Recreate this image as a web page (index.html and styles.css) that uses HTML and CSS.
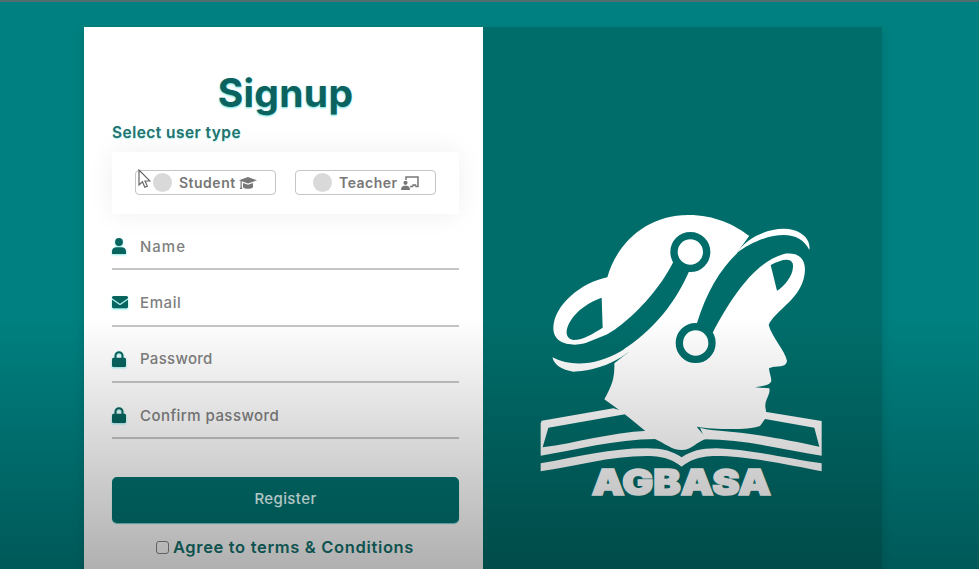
FILE: index.html
```html
<!DOCTYPE html>
<html lang="en">
<head>
<meta charset="utf-8">
<title>Signup</title>
<link rel="stylesheet" href="styles.css">
</head>
<body>
<main class="card">
  <form class="form">
    <h1 class="title"><span>Signup</span></h1>
    <p class="label"><span>Select user type</span></p>
    <div class="types">
      <label class="type"><i class="dot"></i><span class="student">Student</span>
        <svg class="cap" viewBox="0 0 18 14"><path d="M0 4.300 9 1l9 3.300L9 7.500z"/><path d="M4 7v4.300c2 2 8 2 10 0V7L9 8.800zM1.500 5h1.200v6l.7 2H.8l.7-2z"/></svg>
      </label>
      <label class="type"><i class="dot"></i><span class="teacher">Teacher</span>
        <svg class="board" viewBox="0 0 18 14"><path d="M5 4V1h12v9.500h-2.500M9 10.500h3M12 10.500V9h2.500v1.500" fill="none" stroke="currentColor" stroke-width="1.500"/><circle cx="4.500" cy="6.800" r="2.100"/><path d="M0 14c0-3 1.500-4.300 3.500-4.300h2c2 0 3.500 1.300 3.500 4.300z"/></svg>
      </label>
      <svg class="pointer" viewBox="0 0 13 20"><path d="M1 1v15l3.500-3.200 2.300 5.400 2.500-1.100L7 12h5z" fill="#fff" stroke="#666" stroke-width="1.200"/></svg>
    </div>
    <div class="field"><svg viewBox="0 0 16 16"><circle cx="7" cy="4" r="3.900"/><path d="M0 16v-2.500C0 10.500 2 9.200 4.500 9.200h5c2.500 0 4.500 1.300 4.500 4.300V16z"/></svg><span class="t-name">Name</span></div>
    <div class="field"><svg viewBox="0 0 16 16"><path d="M1.500 2h13Q16 2 16 3.500v.8L8 9.800 0 4.300v-.8Q0 2 1.500 2z"/><path d="m0 5.800 8 5.500 8-5.500v7q0 1.500-1.500 1.500h-13Q0 14.300 0 12.800z"/></svg><span class="t-email">Email</span></div>
    <div class="field"><svg viewBox="0 0 16 16"><path d="M3.500 8V4.800a3.500 3.500 0 0 1 7 0V8" fill="none" stroke="currentColor" stroke-width="2"/><rect y="6.700" width="14" height="9.300" rx="1.500"/></svg><span class="t-pass">Password</span></div>
    <div class="field"><svg viewBox="0 0 16 16"><path d="M3.500 8V4.800a3.500 3.500 0 0 1 7 0V8" fill="none" stroke="currentColor" stroke-width="2"/><rect y="6.700" width="14" height="9.300" rx="1.500"/></svg><span class="t-confirm">Confirm password</span></div>
    <button type="button" class="register"><span>Register</span></button>
    <label class="agree"><i class="box"></i><span>Agree to terms &amp; Conditions</span></label>
  </form>
  <section class="brand">
    <svg class="logo" viewBox="0 0 900 930">
      <g class="ink">
        <path d="M35 662 250 625 340 650 380 717C250 718 140 750 32 767V670zM705 635 875 663V767C760 748 640 718 525 718L500 660z"/>
        <path class="ground" d="M55 683 285 643 352 692C240 698 140 728 38 742z"/>
        <path d="M232 232C260 130 350 45 475 45 555 45 612 74 658 108L620 160 690 150 770 160C824 158 832 198 820 240 802 302 732 336 716 375 726 412 765 452 771 482 768 507 735 494 717 505 718 522 728 540 722 547 715 557 695 558 675 562L718 565C722 585 705 597 706 620 712 650 708 672 690 680 650 693 560 690 500 680L530 716C500 724 485 750 455 750 425 750 405 730 375 717L285 643 223 598C238 568 255 545 253 490L295 457 270 440 240 400 165 430C120 441 70 430 70 385 71 315 155 247 232 232z"/>
        <path class="ground" d="M500 680C550 688 650 692 690 678L705 657 853 683 868 740C740 712 650 698 570 692 545 691 520 686 500 680z"/>
        <path class="ground" d="M430 185C385 280 245 437 130 435 99 435 80 425 67 405V472C130 505 210 490 270 455 375 390 440 300 478 212z"/>
        <path class="ground" d="M500 372C530 275 570 210 620 161L658 108C700 90 800 65 838 150L836 178C810 160 795 158 770 160 675 180 600 300 548 398z"/>
        <path d="M620 160C655 105 735 76 790 90 825 100 842 125 838 150 820 111 780 98 730 108 690 116 648 136 620 160zM67 472C130 505 210 490 270 455L300 437 310 445 295 457C240 500 170 515 130 515 95 510 73 495 67 472z"/>
        <path class="ground" d="M215 293 218 383C190 400 160 420 130 420 105 415 105 390 120 365 140 330 180 305 215 293zM722 195C755 178 780 172 788 190 795 220 765 258 741 272z"/>
        <circle class="node" cx="481" cy="156" r="49"/><circle class="node" cx="497" cy="429" r="49"/>
        <path d="M32 790C150 770 240 745 350 745 400 745 430 755 455 772 480 755 510 745 560 745 660 748 780 777 875 790V814C780 795 650 768 560 768 500 768 475 785 455 800 435 785 410 768 350 768 240 768 130 800 32 814z"/>
        <text x="185" y="885" textLength="538" lengthAdjust="spacingAndGlyphs">AGBASA</text>
      </g>
    </svg>
  </section>
</main>
<div class="shade"></div>
</body>
</html>
```
FILE: styles.css
```css
* { box-sizing: border-box; }
body {
  margin: 0;
  height: 569px;
  padding: 25px 0 0 84px;
  overflow: hidden;
  background: #008080;
  border-top: 2px solid #526d70;
  font-family: Inter, "Open Sans", sans-serif;
  color: #0b625e;
}
.card {
  display: flex;
  width: 798px;
  height: 542px;
  box-shadow: 0 5px 10px rgba(0, 0, 0, .15);
}
.form { width: 399px; padding: 40px 24px 0 28px; background: #fff; }
.title { margin: 0; height: 54px; text-align: center; font-size: 39px; line-height: 52px; font-weight: 700; letter-spacing: .3px; text-shadow: 0 1px 2px #62dddd; }
.label { margin: 0; height: 31px; font-size: 15.500px; line-height: 24px; font-weight: 600; letter-spacing: .45px; color: #25736f; text-shadow: 0 1px 1px #b0f0f0; white-space: nowrap; }
.types {
  position: relative;
  display: flex;
  justify-content: center;
  align-items: center;
  gap: 19px;
  height: 62px;
  padding-bottom: 1px;
  background: #fff;
  box-shadow: 0 0 28px rgba(0, 0, 0, .065);
}
.type {
  display: flex;
  align-items: center;
  width: 141px;
  height: 25px;
  padding-left: 17px;
  border: 1.500px solid #c5c5c5;
  border-radius: 4px;
  color: #777;
  font-size: 14px;
  font-weight: 600;
  letter-spacing: .5px;
}
.dot { width: 19px; height: 19px; margin-right: 7px; border-radius: 50%; background: #d9d9d9; flex: none; }
.type svg { width: 18px; height: 14px; margin-left: 3px; fill: currentColor; flex: none; }
.pointer { position: absolute; left: 26px; top: 17px; width: 13px; height: 20px; }
.field {
  display: flex;
  align-items: center;
  height: 56.300px;
  padding-top: 10px;
  border-bottom: 2px solid #c6c6c6;
  font-size: 15px;
  font-weight: 500;
  color: #808080;
}
.t-name { letter-spacing: 1px; }
.t-email { letter-spacing: .6px; }
.t-pass { letter-spacing: .3px; }
.t-confirm { letter-spacing: .45px; }
.field svg { width: 16px; height: 16px; margin-right: 12px; fill: currentColor; color: #07645e; filter: drop-shadow(0 1px 1px #8ee9e9); }
.register {
  display: flex;
  justify-content: center;
  align-items: center;
  width: 100%;
  height: 46px;
  margin: 38px 0 13px;
  padding: 0 0 3px;
  border: 0;
  border-radius: 5px;
  background: #007370;
  box-shadow: 0 1px 1px #70cccc;
  color: #e2fffd;
  font: 500 15px Inter, sans-serif;
  letter-spacing: .4px;
}
.agree { display: flex; justify-content: center; align-items: center; gap: 4px; height: 22px; padding-right: 1px; font-size: 16.500px; font-weight: 600; letter-spacing: .66px; color: #14736f; white-space: nowrap; }
.box { width: 13px; height: 13px; border: 1px solid #888; border-radius: 3px; flex: none; }
.brand { width: 399px; padding: 173px 0 0 47px; background: #006d6a; }
.logo { display: block; width: 300px; height: 310px; }
.ink { fill: #fff; }
.ground { fill: #006d6a; }
.node { stroke: #006d6a; stroke-width: 22px; }
.logo text { font: 900 108px Inter, sans-serif; stroke: #fff; stroke-width: 5px; }
.shade { position: absolute; inset: 0; background: linear-gradient(transparent 56%, rgba(0, 0, 0, .13) 74%, rgba(0, 0, 0, .31)); pointer-events: none; }
```
